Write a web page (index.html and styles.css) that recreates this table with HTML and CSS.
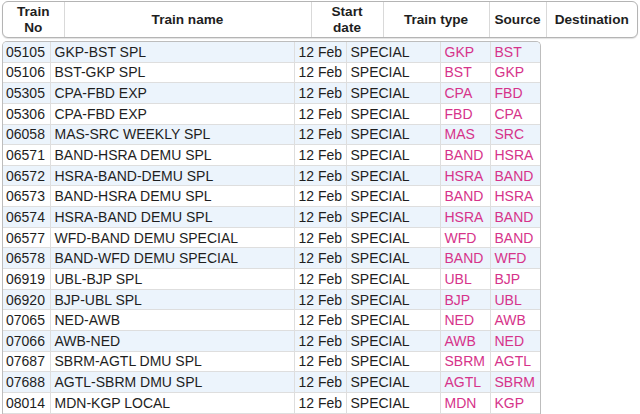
FILE: index.html
```html
<!DOCTYPE html>
<html>
<head>
<meta charset="utf-8">
<link rel="stylesheet" href="styles.css">
</head>
<body>
<div class="page">
  <div class="head">
    <table class="htable">
      <colgroup><col class="h1"><col class="h2"><col class="h3"><col class="h4"><col class="h5"><col class="h6"></colgroup>
      <tr><th>Train<br>No</th><th>Train name</th><th>Start<br>date</th><th>Train type</th><th>Source</th><th>Destination</th></tr>
    </table>
  </div>
  <div class="body">
    <table class="btable">
      <colgroup><col class="b1"><col class="b2"><col class="b3"><col class="b4"><col class="b5"><col class="b6"></colgroup>
      <tr><td>05105</td><td>GKP-BST SPL</td><td>12 Feb</td><td>SPECIAL</td><td class="st">GKP</td><td class="st">BST</td></tr>
      <tr><td>05106</td><td>BST-GKP SPL</td><td>12 Feb</td><td>SPECIAL</td><td class="st">BST</td><td class="st">GKP</td></tr>
      <tr><td>05305</td><td>CPA-FBD EXP</td><td>12 Feb</td><td>SPECIAL</td><td class="st">CPA</td><td class="st">FBD</td></tr>
      <tr><td>05306</td><td>CPA-FBD EXP</td><td>12 Feb</td><td>SPECIAL</td><td class="st">FBD</td><td class="st">CPA</td></tr>
      <tr><td>06058</td><td>MAS-SRC WEEKLY SPL</td><td>12 Feb</td><td>SPECIAL</td><td class="st">MAS</td><td class="st">SRC</td></tr>
      <tr><td>06571</td><td>BAND-HSRA DEMU SPL</td><td>12 Feb</td><td>SPECIAL</td><td class="st">BAND</td><td class="st">HSRA</td></tr>
      <tr><td>06572</td><td>HSRA-BAND-DEMU SPL</td><td>12 Feb</td><td>SPECIAL</td><td class="st">HSRA</td><td class="st">BAND</td></tr>
      <tr><td>06573</td><td>BAND-HSRA DEMU SPL</td><td>12 Feb</td><td>SPECIAL</td><td class="st">BAND</td><td class="st">HSRA</td></tr>
      <tr><td>06574</td><td>HSRA-BAND DEMU SPL</td><td>12 Feb</td><td>SPECIAL</td><td class="st">HSRA</td><td class="st">BAND</td></tr>
      <tr><td>06577</td><td>WFD-BAND DEMU SPECIAL</td><td>12 Feb</td><td>SPECIAL</td><td class="st">WFD</td><td class="st">BAND</td></tr>
      <tr><td>06578</td><td>BAND-WFD DEMU SPECIAL</td><td>12 Feb</td><td>SPECIAL</td><td class="st">BAND</td><td class="st">WFD</td></tr>
      <tr><td>06919</td><td>UBL-BJP SPL</td><td>12 Feb</td><td>SPECIAL</td><td class="st">UBL</td><td class="st">BJP</td></tr>
      <tr><td>06920</td><td>BJP-UBL SPL</td><td>12 Feb</td><td>SPECIAL</td><td class="st">BJP</td><td class="st">UBL</td></tr>
      <tr><td>07065</td><td>NED-AWB</td><td>12 Feb</td><td>SPECIAL</td><td class="st">NED</td><td class="st">AWB</td></tr>
      <tr><td>07066</td><td>AWB-NED</td><td>12 Feb</td><td>SPECIAL</td><td class="st">AWB</td><td class="st">NED</td></tr>
      <tr><td>07687</td><td>SBRM-AGTL DMU SPL</td><td>12 Feb</td><td>SPECIAL</td><td class="st">SBRM</td><td class="st">AGTL</td></tr>
      <tr><td>07688</td><td>AGTL-SBRM DMU SPL</td><td>12 Feb</td><td>SPECIAL</td><td class="st">AGTL</td><td class="st">SBRM</td></tr>
      <tr><td>08014</td><td>MDN-KGP LOCAL</td><td>12 Feb</td><td>SPECIAL</td><td class="st">MDN</td><td class="st">KGP</td></tr>
      <tr><td>&nbsp;</td><td></td><td></td><td></td><td></td><td></td></tr>
    </table>
  </div>
</div>
</body>
</html>
```
FILE: styles.css
```css
html, body {
  margin: 0;
  padding: 0;
  background: #ffffff;
  overflow: hidden;
}
.page {
  padding: 1px 3px 0 2px;
  font-family: "Liberation Sans", Arial, sans-serif;
  color: #1e1e1e;
  display: flex;
  flex-direction: column;
  gap: 3px;
}
.head {
  width: 634px;
  border: 1px solid #b4b4b4;
  border-radius: 6px;
  box-shadow: 0 1px 1px rgba(0,0,0,0.12);
  overflow: hidden;
  background: #fff;
}
.htable, .btable {
  border-collapse: collapse;
  table-layout: fixed;
  width: 100%;
}
.h1 { width: 61px; }
.h2 { width: 247px; }
.h3 { width: 72px; }
.h4 { width: 106px; }
.h5 { width: 57px; }
.h6 { width: 91px; }
.htable th {
  height: 35px;
  padding: 0;
  font-size: 13.6px;
  font-weight: bold;
  line-height: 16px;
  text-align: center;
  border-left: 1px solid #d9d9d9;
}
.htable th:first-child { border-left: none; }
.body {
  width: 537px;
  border: 1px solid #bdbdbd;
  border-bottom: none;
  border-radius: 5px 5px 0 0;
  overflow: hidden;
}
.b1 { width: 47px; }
.b2 { width: 244px; }
.b3 { width: 52px; }
.b4 { width: 94px; }
.b5 { width: 50px; }
.b6 { width: 50px; }
.btable td {
  height: 19.65px;
  padding: 0 0 0 4px;
  font-size: 14px;
  line-height: 16px;
  white-space: nowrap;
  overflow: hidden;
  border-left: 1px solid #dedede;
  border-bottom: 1px solid #dedede;
}
.btable td:first-child { border-left: none; padding-left: 3px; }
.btable tr:nth-child(odd) td { background: #ecf4fc; }
.btable td.st { color: #d6338a; }
```
